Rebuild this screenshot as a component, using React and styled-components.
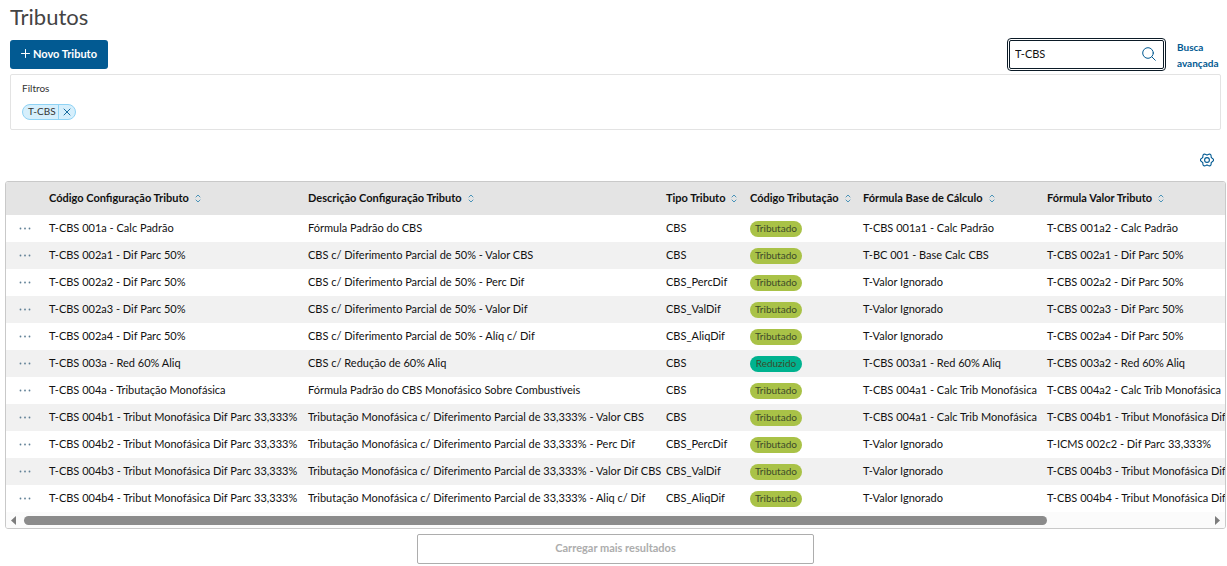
import React, { useEffect, useRef, useState } from "react";
import styled, { createGlobalStyle } from "styled-components";

const BLUE = "#025a92";
const BORDER = "#c9c9c9";

const GlobalStyle = createGlobalStyle`
  * {
    box-sizing: border-box;
  }
  body {
    margin: 0;
    background-color: white;
    color: #111;
    font-family: Lato, sans-serif;
    font-size: 11px;
    line-height: 16px;
  }
  button,
  input {
    font: inherit;
    color: inherit;
  }
`;

const Page = styled.main`
  padding: 3px 1px 2px 5px;
`;

const Top = styled.div`
  padding: 0 5px;
`;

const Title = styled.h1`
  margin: 0 0 7px;
  font-size: 22px;
  font-weight: 400;
  line-height: 28px;
  color: #444;
`;

const Toolbar = styled.div`
  display: flex;
  justify-content: space-between;
  align-items: flex-start;
  height: 36px;
`;

const NewButton = styled.button`
  display: flex;
  align-items: center;
  justify-content: center;
  gap: 3px;
  width: 98px;
  height: 29px;
  margin-top: 2px;
  padding: 0 0 2px;
  border: 0;
  border-radius: 3px;
  background-color: ${BLUE};
  color: white;
  font-weight: 700;
`;

const Search = styled.div`
  display: flex;
  gap: 11px;
`;

const SearchBox = styled.form`
  display: flex;
  align-items: center;
  width: 159px;
  height: 33px;
  padding: 0 7px 2px 5px;
  border: 3px double #0b1a26;
  border-radius: 4px;
`;

const SearchInput = styled.input`
  flex: 1;
  min-width: 0;
  padding: 0;
  border: 0;
  outline: 0;
  background: transparent;
`;

const IconButton = styled.button`
  display: flex;
  padding: 0;
  border: 0;
  background: transparent;
  color: ${BLUE};
`;

const AdvancedLink = styled.a`
  width: 44px;
  padding-top: 1px;
  font-size: 10px;
  font-weight: 700;
  color: ${BLUE};
  text-decoration: none;
`;

const Filters = styled.section`
  height: 56px;
  padding: 5px 11px;
  border: 1px solid #e3e3e3;
  border-radius: 2px;
`;

const FiltersTitle = styled.div`
  margin-bottom: 7px;
  font-size: 10px;
  color: #333;
`;

const Chip = styled.span`
  display: inline-flex;
  align-items: center;
  height: 16px;
  border: 1px solid #8fd3f5;
  border-radius: 8px;
  background-color: #d6effc;
  font-size: 10px;
  line-height: 12px;
  color: #333;
`;

const ChipText = styled.span`
  padding: 0 2px 2px 5px;
`;

const ChipRemove = styled(IconButton)`
  align-items: center;
  height: 14px;
  padding: 0 4px 1px;
  border-left: 1px solid #8fd3f5;
`;

const Settings = styled.div`
  display: flex;
  justify-content: flex-end;
  padding: 23px 7px 14px;
`;

const TableFrame = styled.div`
  border: 1px solid ${BORDER};
  border-radius: 3px;
  overflow: hidden;
`;

const TableScroll = styled.div`
  overflow-x: auto;
  scrollbar-width: none;
`;

const Table = styled.table`
  width: 100%;
  min-width: 1410px;
  border-spacing: 0;
  table-layout: fixed;
`;

const Th = styled.th`
  width: ${props => (props.$width ? props.$width + "px" : "auto")};
  height: 33px;
  padding: 0 5px 2px;
  background-color: #e4e4e4;
  text-align: left;
  white-space: nowrap;
`;

const Sort = styled(IconButton)`
  display: inline-flex;
  margin-left: 6px;
  vertical-align: -1px;
  color: #4a93b8;
`;

const Row = styled.tr`
  &:nth-child(even) {
    background-color: #f1f1f1;
  }
`;

const Td = styled.td`
  height: 27px;
  padding: 0 5px 2px;
  white-space: nowrap;
`;

const MenuCell = styled(Td)`
  padding: 0 13px;
`;

const Badge = styled.span`
  display: block;
  width: 52px;
  height: 16px;
  margin-top: 2px;
  border-radius: 8px;
  background-color: ${props => (props.$reduced ? "#00b28f" : "#a9c247")};
  font-size: 10px;
  line-height: 14px;
  text-align: center;
  color: #3c4a2a;
`;

const ScrollBar = styled.div`
  display: flex;
  align-items: center;
  height: 16px;
  padding: 0 5px;
  background-color: #fbfbfb;
`;

const ScrollArrow = styled(IconButton)`
  color: #7d7d7d;
`;

const Track = styled.div`
  flex: 1;
  margin: 0 8px;
`;

const Thumb = styled.div`
  height: 9px;
  border-radius: 5px;
  background-color: #8b8b8b;
`;

const LoadMore = styled.button`
  display: block;
  width: 397px;
  height: 30px;
  margin: 5px auto 0;
  padding: 0 0 2px;
  border: 1px solid #adadad;
  border-radius: 2px;
  background-color: white;
  font-weight: 700;
  color: #adadad;
`;

const stroke = {
  fill: "none",
  stroke: "currentColor",
  strokeLinecap: "round",
  strokeLinejoin: "round"
};

const PlusIcon = () => (
  <svg width="9" height="9" viewBox="0 0 9 9" {...stroke}>
    <path d="M4.5 .5v8M.5 4.5h8" />
  </svg>
);

const SearchIcon = () => (
  <svg width="14" height="14" viewBox="0 0 14 14" {...stroke}>
    <circle cx="6" cy="6" r="5.3" />
    <path d="M9.9 9.9l3.4 3.4" />
  </svg>
);

const CloseIcon = () => (
  <svg width="8" height="8" viewBox="0 0 8 8" {...stroke} strokeWidth=".9">
    <path d="M1 1l6 6M7 1L1 7" />
  </svg>
);

// six rounded teeth, two of them on the horizontal axis
const GEAR = Array.from({ length: 60 }, (_, i) => {
  const a = (i * Math.PI) / 30;
  const r = 5.8 + 0.8 * Math.cos(6 * a);
  return `${(7 + r * Math.cos(a)).toFixed(2)},${(7 + r * Math.sin(a)).toFixed(2)}`;
}).join(" ");

const GearIcon = () => (
  <svg width="14" height="14" viewBox="0 0 14 14" {...stroke} strokeWidth="1.1">
    <polygon points={GEAR} />
    <circle cx="7" cy="7" r="2.4" />
  </svg>
);

const SortIcon = () => (
  <svg width="6" height="9" viewBox="0 0 6 9" {...stroke}>
    <path d="M1 3l2-2 2 2M1 6l2 2 2-2" />
  </svg>
);

const DotsIcon = () => (
  <svg width="12" height="3" viewBox="0 0 12 3" fill="#5f7f95">
    <circle cx="1.5" cy="1.5" r=".9" />
    <circle cx="6" cy="1.5" r=".9" />
    <circle cx="10.5" cy="1.5" r=".9" />
  </svg>
);

const ArrowIcon = ({ right }) => (
  <svg width="5" height="9" viewBox="0 0 5 9" fill="currentColor">
    <path d={right ? "M0 0v9l5-4.5z" : "M5 0v9L0 4.5z"} />
  </svg>
);

const COLUMNS = [
  { title: "Código Configuração Tributo", width: 259 },
  { title: "Descrição Configuração Tributo", width: 358 },
  { title: "Tipo Tributo", width: 84 },
  { title: "Código Tributação", width: 113 },
  { title: "Fórmula Base de Cálculo", width: 184 },
  { title: "Fórmula Valor Tributo" }
];

const T = "Tributado";
const IGNORED = "T-Valor Ignorado";

const ROWS = [
  ["T-CBS 001a - Calc Padrão", "Fórmula Padrão do CBS", "CBS", T, "T-CBS 001a1 - Calc Padrão", "T-CBS 001a2 - Calc Padrão"],
  ["T-CBS 002a1 - Dif Parc 50%", "CBS c/ Diferimento Parcial de 50% - Valor CBS", "CBS", T, "T-BC 001 - Base Calc CBS", "T-CBS 002a1 - Dif Parc 50%"],
  ["T-CBS 002a2 - Dif Parc 50%", "CBS c/ Diferimento Parcial de 50% - Perc Dif", "CBS_PercDif", T, IGNORED, "T-CBS 002a2 - Dif Parc 50%"],
  ["T-CBS 002a3 - Dif Parc 50%", "CBS c/ Diferimento Parcial de 50% - Valor Dif", "CBS_ValDif", T, IGNORED, "T-CBS 002a3 - Dif Parc 50%"],
  ["T-CBS 002a4 - Dif Parc 50%", "CBS c/ Diferimento Parcial de 50% - Alíq c/ Dif", "CBS_AliqDif", T, IGNORED, "T-CBS 002a4 - Dif Parc 50%"],
  ["T-CBS 003a - Red 60% Aliq", "CBS c/ Redução de 60% Aliq", "CBS", "Reduzido", "T-CBS 003a1 - Red 60% Aliq", "T-CBS 003a2 - Red 60% Aliq"],
  ["T-CBS 004a - Tributação Monofásica", "Fórmula Padrão do CBS Monofásico Sobre Combustíveis", "CBS", T, "T-CBS 004a1 - Calc Trib Monofásica", "T-CBS 004a2 - Calc Trib Monofásica"],
  ["T-CBS 004b1 - Tribut Monofásica Dif Parc 33,333%", "Tributação Monofásica c/ Diferimento Parcial de 33,333% - Valor CBS", "CBS", T, "T-CBS 004a1 - Calc Trib Monofásica", "T-CBS 004b1 - Tribut Monofásica Dif Parc 33,333%"],
  ["T-CBS 004b2 - Tribut Monofásica Dif Parc 33,333%", "Tributação Monofásica c/ Diferimento Parcial de 33,333% - Perc Dif", "CBS_PercDif", T, IGNORED, "T-ICMS 002c2 - Dif Parc 33,333%"],
  ["T-CBS 004b3 - Tribut Monofásica Dif Parc 33,333%", "Tributação Monofásica c/ Diferimento Parcial de 33,333% - Valor Dif CBS", "CBS_ValDif", T, IGNORED, "T-CBS 004b3 - Tribut Monofásica Dif Parc 33,333%"],
  ["T-CBS 004b4 - Tribut Monofásica Dif Parc 33,333%", "Tributação Monofásica c/ Diferimento Parcial de 33,333% - Aliq c/ Dif", "CBS_AliqDif", T, IGNORED, "T-CBS 004b4 - Tribut Monofásica Dif Parc 33,333%"]
];

const App = () => {
  const [query, setQuery] = useState("T-CBS");
  const [filter, setFilter] = useState("T-CBS");
  const [thumb, setThumb] = useState({ size: 1, start: 0 });
  const scrollRef = useRef(null);

  const measure = () => {
    const { clientWidth, scrollWidth, scrollLeft } = scrollRef.current;
    setThumb({ size: clientWidth / scrollWidth, start: scrollLeft / scrollWidth });
  };

  useEffect(() => {
    measure();
    window.addEventListener("resize", measure);
    return () => window.removeEventListener("resize", measure);
  }, []);

  const scroll = left => scrollRef.current.scrollBy({ left });

  return (
    <Page>
      <GlobalStyle />
      <Top>
        <Title>Tributos</Title>
        <Toolbar>
          <NewButton type="button">
            <PlusIcon />
            Novo Tributo
          </NewButton>
          <Search>
            <SearchBox
              onSubmit={e => {
                e.preventDefault();
                setFilter(query);
              }}
            >
              <SearchInput
                aria-label="Buscar"
                value={query}
                onChange={e => setQuery(e.target.value)}
              />
              <IconButton aria-label="Pesquisar">
                <SearchIcon />
              </IconButton>
            </SearchBox>
            <AdvancedLink href="#busca">Busca avançada</AdvancedLink>
          </Search>
        </Toolbar>
        <Filters>
          <FiltersTitle>Filtros</FiltersTitle>
          {filter && (
            <Chip>
              <ChipText>{filter}</ChipText>
              <ChipRemove
                type="button"
                aria-label="Remover filtro"
                onClick={() => setFilter("")}
              >
                <CloseIcon />
              </ChipRemove>
            </Chip>
          )}
        </Filters>
        <Settings>
          <IconButton type="button" aria-label="Configurações">
            <GearIcon />
          </IconButton>
        </Settings>
      </Top>
      <TableFrame>
        <TableScroll ref={scrollRef} onScroll={measure}>
          <Table>
            <thead>
              <tr>
                <Th $width={38} />
                {COLUMNS.map(col => (
                  <Th key={col.title} $width={col.width}>
                    {col.title}
                    <Sort type="button" aria-label="Ordenar">
                      <SortIcon />
                    </Sort>
                  </Th>
                ))}
              </tr>
            </thead>
            <tbody>
              {ROWS.map(row => (
                <Row key={row[0]}>
                  <MenuCell>
                    <IconButton type="button" aria-label="Ações">
                      <DotsIcon />
                    </IconButton>
                  </MenuCell>
                  {row.map((text, i) => (
                    <Td key={i}>
                      {i === 3 ? (
                        <Badge $reduced={text !== T}>{text}</Badge>
                      ) : (
                        text
                      )}
                    </Td>
                  ))}
                </Row>
              ))}
            </tbody>
          </Table>
        </TableScroll>
        <ScrollBar>
          <ScrollArrow type="button" aria-label="Anterior" onClick={() => scroll(-80)}>
            <ArrowIcon />
          </ScrollArrow>
          <Track>
            <Thumb
              style={{
                width: thumb.size * 100 + "%",
                marginLeft: thumb.start * 100 + "%"
              }}
            />
          </Track>
          <ScrollArrow type="button" aria-label="Próximo" onClick={() => scroll(80)}>
            <ArrowIcon right />
          </ScrollArrow>
        </ScrollBar>
      </TableFrame>
      <LoadMore type="button">Carregar mais resultados</LoadMore>
    </Page>
  );
};

export default App;
